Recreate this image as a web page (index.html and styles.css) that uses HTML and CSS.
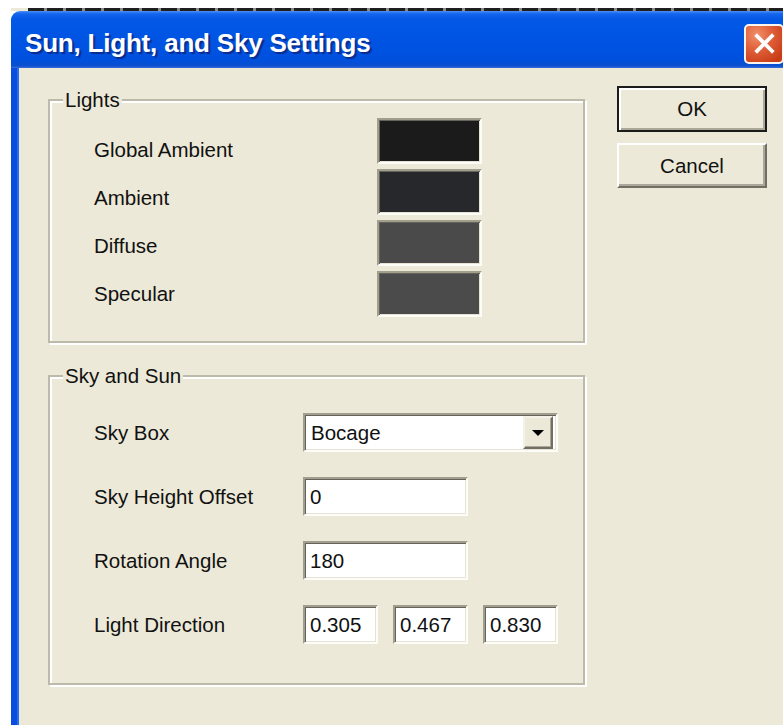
FILE: index.html
```html
<!DOCTYPE html>
<html lang="en">
<head>
<meta charset="utf-8">
<title>Sun, Light, and Sky Settings</title>
<link rel="stylesheet" href="styles.css">
</head>
<body>
<div class="desktop"></div>
<div class="window">
  <div class="titlebar">
    <span class="title">Sun, Light, and Sky Settings</span>
    <button class="close" aria-label="Close">
      <svg viewBox="0 0 36 36" width="27" height="27"><path d="M8 8 L28 28 M28 8 L8 28" stroke="#fff" stroke-width="5" stroke-linecap="square" fill="none"/></svg>
    </button>
  </div>
  <div class="client">
    <div class="groups">
      <fieldset class="group lights">
        <legend>Lights</legend>
        <div class="lights-grid">
          <div class="light-labels">
            <span>Global Ambient</span>
            <span>Ambient</span>
            <span>Diffuse</span>
            <span>Specular</span>
          </div>
          <div class="swatches">
            <span class="swatch" style="background:#1b1b1b"></span>
            <span class="swatch" style="background:#27282c"></span>
            <span class="swatch" style="background:#4a4a4a"></span>
            <span class="swatch" style="background:#4b4b4b"></span>
          </div>
        </div>
      </fieldset>
      <fieldset class="group sky">
        <legend>Sky and Sun</legend>
        <div class="sky-grid">
          <span class="label">Sky Box</span>
          <div class="combo"><span class="combo-text">Bocage</span><span class="drop"><svg viewBox="0 0 12 6" width="12" height="6"><path d="M0 0 H12 L6 6 Z" fill="#000"/></svg></span></div>
          <span class="label">Sky Height Offset</span>
          <input class="field wide" type="text" value="0">
          <span class="label">Rotation Angle</span>
          <input class="field wide" type="text" value="180">
          <span class="label">Light Direction</span>
          <div class="vector">
            <input class="field small" type="text" value="0.305">
            <input class="field small" type="text" value="0.467">
            <input class="field small" type="text" value="0.830">
          </div>
        </div>
      </fieldset>
    </div>
    <div class="actions">
      <button class="btn default">OK</button>
      <button class="btn">Cancel</button>
    </div>
  </div>
</div>
</body>
</html>
```
FILE: styles.css
```css
html, body {
  margin: 0;
  height: 100%;
  overflow: hidden;
  background: #fff;
}

body {
  font-family: "Liberation Sans", Arial, sans-serif;
  font-size: 20.5px;
  color: #111;
}

/* strip of desktop showing above the window */
.desktop {
  height: 11px;
  background:
    repeating-linear-gradient(90deg, #1f1f1f 0 16px, #8a8a8a 16px 19px) 28px 8px / 100% 3px no-repeat,
    linear-gradient(#ece9d8, #ece9d8) 11px 8px / 17px 3px no-repeat,
    #fff;
}

.window {
  margin-left: 11px;
  width: 790px;
  height: calc(100% - 11px);
  display: flex;
  flex-direction: column;
}

.titlebar {
  height: 57px;
  box-sizing: border-box;
  padding: 8px 17px 0 14px;
  display: flex;
  align-items: center;
  justify-content: space-between;
  border-radius: 9px 9px 0 0;
  background: linear-gradient(#4a90f7 0, #1565ec 5%, #0458e6 14%, #0054e3 50%, #0050de 85%, #0a4fd0 96%, #3a6fd8 100%);
}

.title {
  color: #fff;
  font-weight: bold;
  font-size: 26px;
  letter-spacing: -0.2px;
  text-shadow: 2px 2px 1px #0a2c8e;
}

.close {
  width: 40px;
  height: 40px;
  padding: 0;
  box-sizing: border-box;
  border: 2px solid #fbf4ee;
  border-radius: 5px;
  background: radial-gradient(circle at 30% 25%, #f0906a 0, #e0603a 40%, #c83d18 85%);
  display: flex;
  align-items: center;
  justify-content: center;
}

.client {
  flex: 1;
  display: flex;
  align-items: flex-start;
  padding: 18px 0 0 31px;
  background: #ece9d8;
  border-left: 6px solid #0a4ee0;
  box-shadow: inset 2px 0 0 #2a6cf0;
}

.groups {
  margin-top: 3px;
  width: 537px;
}

/* etched group box */
.group {
  margin: 0;
  padding: 0;
  min-width: 0;
  border: 2px solid #bdbaab;
  box-shadow: inset 2px 2px 0 #fff, 2px 2px 0 #fff;
}

.group legend {
  margin-left: 13px;
  padding: 0 2px;
  line-height: 22px;
  background: #ece9d8;
}

.sky {
  margin-top: 22px;
}

.lights-grid {
  display: grid;
  grid-template-columns: 283px 105px;
  padding: 7px 0 23px 44px;
}

.light-labels {
  display: flex;
  flex-direction: column;
  padding-top: 8px;
  line-height: 48px;
}

.swatches {
  display: flex;
  flex-direction: column;
  gap: 5px;
}

/* sunken frame shared by swatches and edit fields */
.swatch, .field, .combo {
  box-sizing: border-box;
  border: 2px solid;
  border-color: #a19e8d #fdfdf8 #fdfdf8 #a19e8d;
  box-shadow: inset 1px 1px 0 #66645a, inset -1px -1px 0 #e6e3d6;
}

.swatch {
  display: block;
  width: 105px;
  height: 46px;
}

.sky-grid {
  display: grid;
  grid-template-columns: 209px auto;
  align-items: center;
  row-gap: 25px;
  padding: 26px 0 39px 44px;
}

.field {
  height: 39px;
  margin: 0;
  padding: 0 0 0 5px;
  font: inherit;
  color: #111;
  background: #fff;
  outline: none;
}

.field.wide {
  width: 165px;
}

.vector {
  display: flex;
  gap: 15px;
}

.field.small {
  width: 75px;
}

.combo {
  width: 255px;
  height: 39px;
  background: #fff;
  display: flex;
  align-items: center;
  justify-content: space-between;
  padding: 1px 3px 1px 6px;
}

.drop {
  width: 30px;
  height: 33px;
  box-sizing: border-box;
  display: flex;
  align-items: center;
  justify-content: center;
  background: #ece9d8;
  border: 2px solid;
  border-color: #f4f2e8 #716f64 #716f64 #f4f2e8;
  box-shadow: inset -1px -1px 0 #aca899;
}

.actions {
  margin-left: 32px;
  width: 150px;
  display: flex;
  flex-direction: column;
  gap: 11px;
}

.btn {
  height: 45px;
  padding: 0;
  font: inherit;
  color: #111;
  background: #ece9d8;
  border: 2px solid;
  border-color: #fff #716f64 #716f64 #fff;
  box-shadow: inset -2px -2px 0 #aca899;
}

.btn.default {
  height: 46px;
  border: 2px solid #1b1b1b;
  box-shadow: inset 2px 2px 0 #fff, inset -2px -2px 0 #aca899;
}
```
